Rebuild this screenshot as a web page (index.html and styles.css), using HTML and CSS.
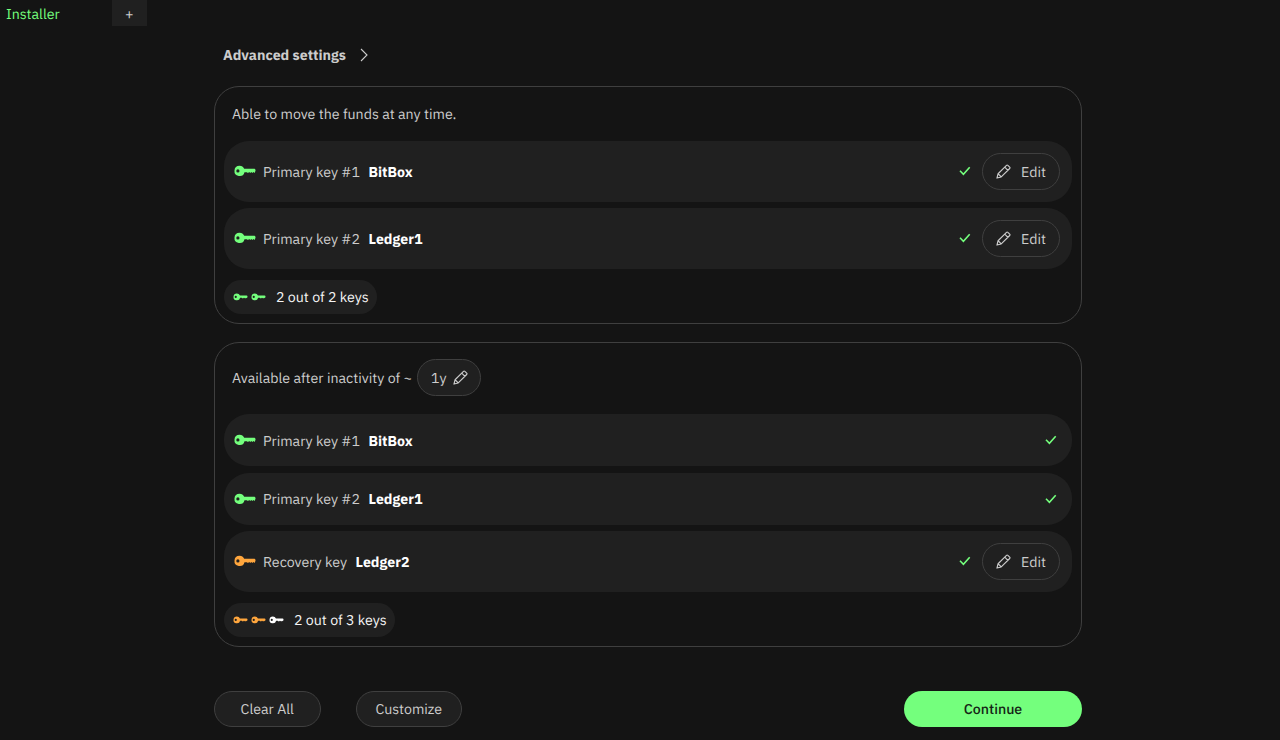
FILE: index.html
```html
<!DOCTYPE html>
<html lang="en">
<head>
<meta charset="utf-8">
<title>Installer</title>
<link rel="stylesheet" href="styles.css">
</head>
<body>
<svg class="defs" aria-hidden="true">
  <symbol id="key" viewBox="0 0 22 12">
    <path fill="currentColor" fill-rule="evenodd" d="M5.6 .8a5.1 5.1 0 0 1 4.6 3h9.9c.8 0 1.4.6 1.4 1.4v.9l-1 1.8-1.1-.9-1.1 1.1-1-1-1.1 1-1-1-1.2 1-1.2-.9h-2.3A5.1 5.1 0 1 1 5.6.8zM3.9 4.3a1.6 1.6 0 1 0 0 3.2 1.6 1.6 0 0 0 0-3.2z"/>
  </symbol>
  <symbol id="pencil" viewBox="0 0 16 16">
    <path fill="none" stroke="currentColor" stroke-width="1.2" stroke-linejoin="round" d="M1 15l1.2-4.6L11.2 1.4a1 1 0 0 1 1.4 0l2 2a1 1 0 0 1 0 1.4L5.6 13.8zM9.3 3.3l3.4 3.4M2.2 10.4l3.4 3.4"/>
  </symbol>
  <symbol id="check" viewBox="0 0 12 10">
    <path fill="none" stroke="currentColor" stroke-width="1.6" d="M1 4.8l3.4 3.5 6.3-7"/>
  </symbol>
</svg>

<nav class="tabs">
  <span class="tab">Installer</span>
  <span class="tab-add">+</span>
</nav>

<main class="content">
  <div class="advanced">
    <span class="advanced-label">Advanced settings</span>
    <svg class="chevron" viewBox="0 0 8 14"><path fill="none" stroke="currentColor" stroke-width="1.1" d="M1 1l6 6-6 6"/></svg>
  </div>

  <section class="panel">
    <div class="panel-head primary-head"><span>Able to move the funds at any time.</span></div>
    <div class="rows">
      <div class="row tall">
        <svg class="key green"><use href="#key"/></svg><span class="role">Primary key #1</span><b>BitBox</b>
        <svg class="check"><use href="#check"/></svg>
        <span class="btn edit"><svg class="pencil"><use href="#pencil"/></svg>Edit</span>
      </div>
      <div class="row tall">
        <svg class="key green"><use href="#key"/></svg><span class="role">Primary key #2</span><b>Ledger1</b>
        <svg class="check"><use href="#check"/></svg>
        <span class="btn edit"><svg class="pencil"><use href="#pencil"/></svg>Edit</span>
      </div>
    </div>
    <div class="threshold">
      <svg class="mini green"><use href="#key"/></svg><svg class="mini green"><use href="#key"/></svg>
      <span class="count">2 out of 2 keys</span>
    </div>
  </section>

  <section class="panel recovery">
    <div class="panel-head"><span>Available after inactivity of ~</span><span class="btn delay">1y<svg class="pencil"><use href="#pencil"/></svg></span></div>
    <div class="rows">
      <div class="row">
        <svg class="key green"><use href="#key"/></svg><span class="role">Primary key #1</span><b>BitBox</b>
        <svg class="check last"><use href="#check"/></svg>
      </div>
      <div class="row">
        <svg class="key green"><use href="#key"/></svg><span class="role">Primary key #2</span><b>Ledger1</b>
        <svg class="check last"><use href="#check"/></svg>
      </div>
      <div class="row tall">
        <svg class="key orange"><use href="#key"/></svg><span class="role recovery-role">Recovery key</span><b>Ledger2</b>
        <svg class="check"><use href="#check"/></svg>
        <span class="btn edit"><svg class="pencil"><use href="#pencil"/></svg>Edit</span>
      </div>
    </div>
    <div class="threshold">
      <svg class="mini orange"><use href="#key"/></svg><svg class="mini orange"><use href="#key"/></svg><svg class="mini white"><use href="#key"/></svg>
      <span class="count">2 out of 3 keys</span>
    </div>
  </section>

  <footer class="actions">
    <span class="btn wide">Clear All</span>
    <span class="btn wide">Customize</span>
    <span class="continue">Continue</span>
  </footer>
</main>
</body>
</html>
```
FILE: styles.css
```css
* { box-sizing: border-box; }
body {
  margin: 0;
  height: 740px;
  overflow: hidden;
  background: #141414;
  color: #ccc;
  font: 14.2px/20px "IBM Plex Sans", Roboto, "Noto Sans", sans-serif;
  text-rendering: geometricPrecision;
  white-space: nowrap;
}
svg { display: block; flex: none; }
.defs { display: none; }
.tabs { display: flex; height: 26px; line-height: 27px; }
.tab { width: 111.5px; padding-left: 6px; color: #74ff7d; }
.tab-add { width: 35.5px; background: #202020; text-align: center; }
.content { width: 868px; margin-left: 214px; }
.advanced { display: flex; align-items: center; height: 60px; padding: 0 0 2px 9px; }
.advanced-label { width: 136.5px; font-weight: 700; }
.chevron { width: 8px; height: 14px; }
.panel {
  height: 238px;
  border: 1px solid #3f3f3f;
  border-radius: 25px;
  padding: 0 9px;
}
.panel-head { display: flex; align-items: center; height: 71px; padding: 0 0 2px 8px; }
.primary-head { height: 54px; padding-bottom: 1px; }
.rows { display: flex; flex-direction: column; gap: 6.5px; }
.row {
  display: flex;
  align-items: center;
  height: 52px;
  padding: 0 12px 0 10px;
  border-radius: 25px;
  background: #202020;
}
.row.tall { height: 60.5px; }
.key { width: 22px; height: 12px; }
.green { color: #74ff7d; }
.orange { color: #ffa63d; }
.white { color: #fff; }
.role { flex: none; width: 112.5px; padding: 1px 0 0 7px; }
.recovery-role { width: 99.5px; }
.row b { padding-top: 1px; color: #fff; }
.check { width: 12px; height: 10px; margin-left: auto; margin-right: 11.5px; color: #74ff7d; }
.check.last { margin-right: 3px; }
.btn {
  display: flex;
  align-items: center;
  justify-content: center;
  height: 36.5px;
  border: 1px solid #3f3f3f;
  border-radius: 19px;
  background: #202020;
}
.edit { width: 78px; gap: 10px; padding-top: 1px; }
.pencil { width: 15px; height: 15px; }
.delay { width: 64.5px; gap: 6px; margin-left: 5px; }
.threshold {
  display: inline-flex;
  align-items: center;
  height: 34px;
  margin-top: 11px;
  padding: 0 8px 0 9px;
  border-radius: 17px;
  background: #202020;
  color: #f5f5f5;
}
.mini { width: 15px; height: 8px; margin-right: 3px; }
.count { margin-left: 7px; }
.recovery { height: 305px; margin-top: 18px; }
.actions { display: flex; gap: 35px; margin-top: 43.5px; }
.wide { width: 106.5px; }
.continue {
  width: 178px;
  height: 36.5px;
  margin-left: auto;
  border-radius: 19px;
  background: #74ff7d;
  color: #142415;
  font-weight: 500;
  line-height: 36px;
  text-align: center;
}
```
